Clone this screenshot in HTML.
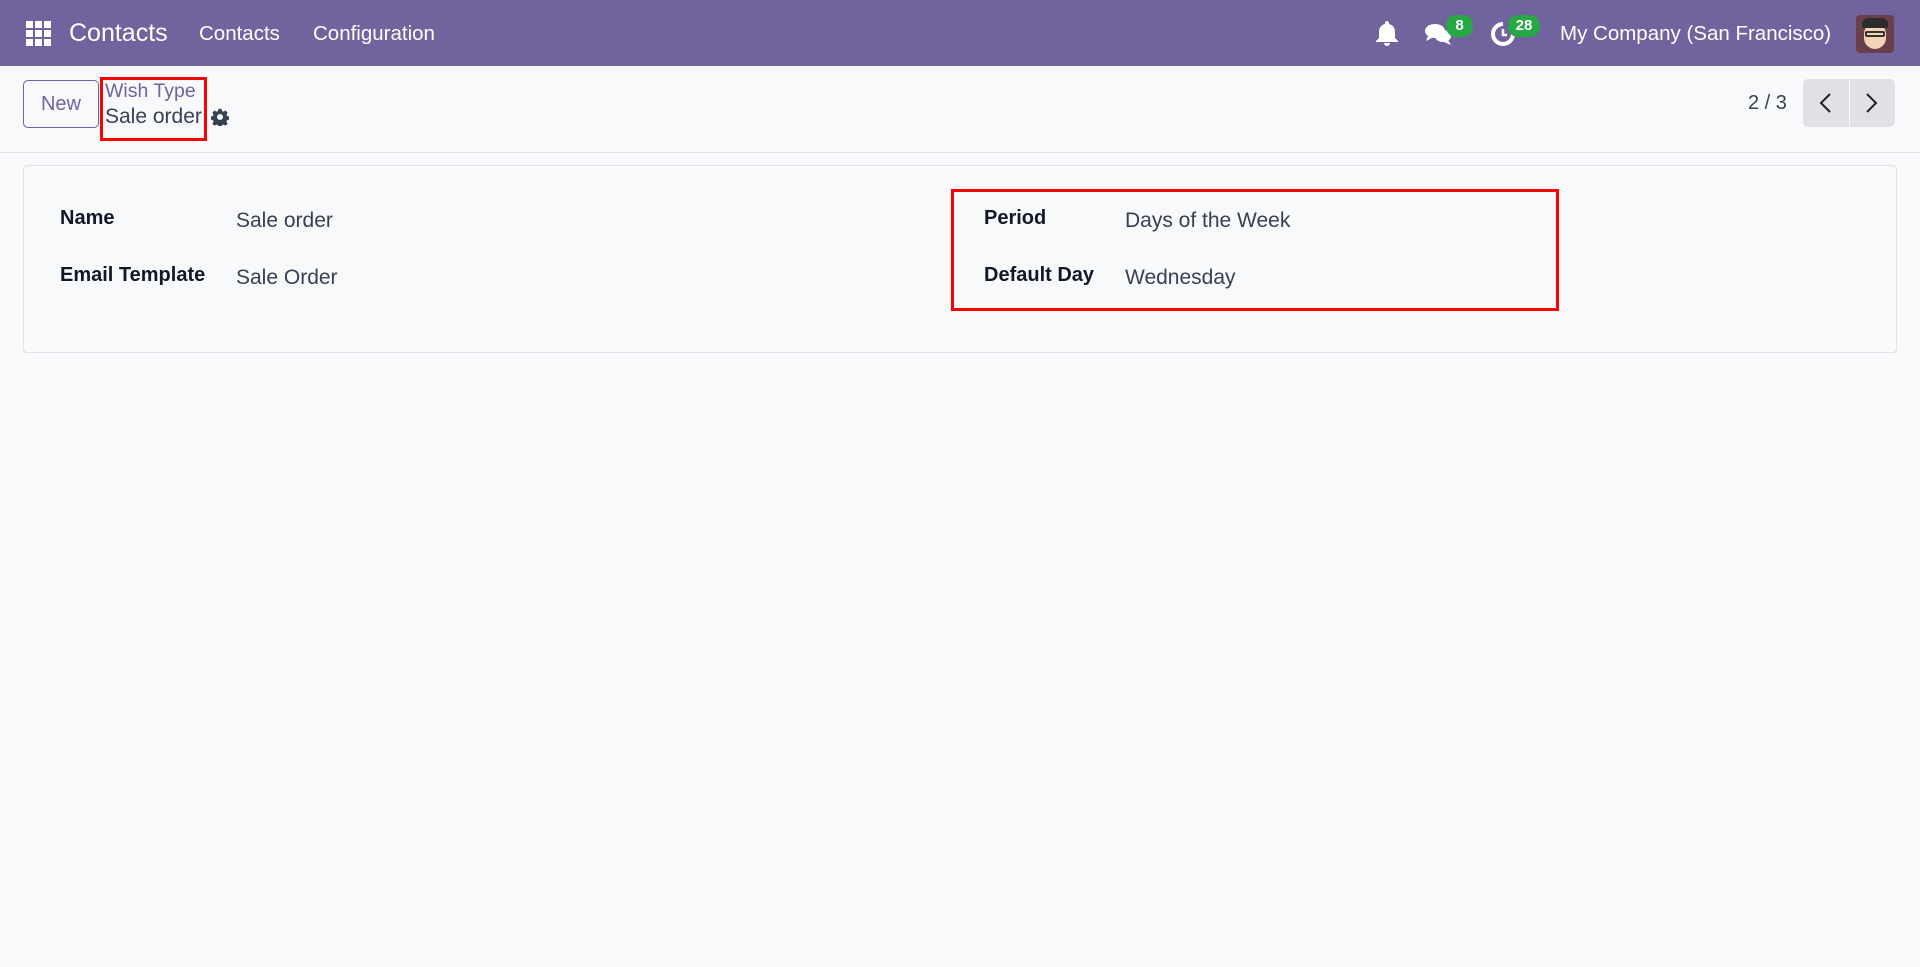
<!DOCTYPE html>
<html><head><meta charset="utf-8"><style>
*{box-sizing:border-box;margin:0;padding:0}
body{width:1920px;height:967px;background:#f8f9fb;font-family:"Liberation Sans",sans-serif;position:relative;overflow:hidden;color:#374151}
.nav{position:absolute;left:0;top:0;width:1920px;height:66px;background:#71639e;color:#fff}
.abs{position:absolute;white-space:nowrap}
.badge{position:absolute;background:#28a745;color:#fff;font-size:15px;font-weight:bold;border-radius:10px;height:22px;line-height:22px;text-align:center}
.lbl{position:absolute;font-weight:bold;font-size:20px;color:#111827;white-space:nowrap}
.val{position:absolute;font-size:21px;color:#374151;white-space:nowrap}
</style></head><body>
<div class="nav">
  <svg class="abs" style="left:26px;top:21px" width="25" height="25" viewBox="0 0 25 25" fill="#fff">
    <rect x="0" y="0" width="7" height="7"/><rect x="9" y="0" width="7" height="7"/><rect x="18" y="0" width="7" height="7"/>
    <rect x="0" y="9" width="7" height="7"/><rect x="9" y="9" width="7" height="7"/><rect x="18" y="9" width="7" height="7"/>
    <rect x="0" y="18" width="7" height="7"/><rect x="9" y="18" width="7" height="7"/><rect x="18" y="18" width="7" height="7"/>
  </svg>
  <div class="abs" style="left:69px;top:19px;font-size:25px">Contacts</div>
  <div class="abs" style="left:199px;top:22px;font-size:20.5px">Contacts</div>
  <div class="abs" style="left:313px;top:22px;font-size:20.5px">Configuration</div>
  <svg class="abs" style="left:1375px;top:20px" width="24" height="27" viewBox="0 0 24 27" fill="#fff"><path d="M12 1c-1 0-2 1-2 2v1C6 5 4 8 4 12v6l-3 3v1h22v-1l-3-3v-6c0-4-2-7-6-8V3c0-1-1-2-2-2zM9 23a3 3 0 0 0 6 0z"/></svg>
  <svg class="abs" style="left:1424px;top:22px" width="30" height="24" viewBox="0 0 30 24" fill="#fff"><ellipse cx="11" cy="9" rx="10" ry="7"/><path d="M4 14l-2 5 6-3z"/><ellipse cx="19" cy="14" rx="8" ry="6"/><path d="M24 18l3 5-7-3z"/></svg>
  <div class="badge" style="left:1446px;top:15px;width:27px">8</div>
  <svg class="abs" style="left:1490px;top:21px" width="26" height="26" viewBox="0 0 26 26" fill="none" stroke="#fff" stroke-width="4"><path d="M13 3a10 10 0 1 0 10 10"/><path d="M13 8v6h4" stroke-width="2.5"/></svg>
  <div class="badge" style="left:1508px;top:15px;width:32px">28</div>
  <div class="abs" style="left:1560px;top:22px;font-size:20.5px">My Company (San Francisco)</div>
  <div class="abs" style="left:1856px;top:15px;width:38px;height:38px;border-radius:4px;background:#6b3e4c;overflow:hidden">
    <div style="position:absolute;left:8px;top:8px;width:22px;height:26px;border-radius:11px;background:#f3d3b5"></div>
    <div style="position:absolute;left:6px;top:3px;width:26px;height:10px;border-radius:6px 6px 2px 2px;background:#2d2d2d"></div>
    <div style="position:absolute;left:9px;top:16px;width:20px;height:6px;border:2px solid #333;border-radius:2px"></div>
  </div>
</div>
<div class="abs" style="left:23px;top:80px;width:76px;height:48px;border:1px solid #71639e;border-radius:5px;color:#71639e;font-size:20px;text-align:center;line-height:46px">New</div>
<div class="abs" style="left:105px;top:80px;font-size:19.5px;color:#71639e">Wish Type</div>
<div class="abs" style="left:105px;top:105px;font-size:21px;color:#374151">Sale order</div>
<div class="abs" style="left:100px;top:77px;width:107px;height:64px;border:3px solid #ff0000"></div>
<svg class="abs" style="left:211px;top:108px" width="18" height="18" viewBox="0 0 24 24" fill="#374151"><path d="M10 1h4l.6 3 2.2 1 2.6-1.7 2.8 2.8L20.5 8.7l1 2.2 3 .6v4l-3 .6-1 2.2 1.7 2.6-2.8 2.8-2.6-1.7-2.2 1-.6 3h-4l-.6-3-2.2-1-2.6 1.7-2.8-2.8 1.7-2.6-1-2.2-3-.6v-4l3-.6 1-2.2L1.8 6.1l2.8-2.8L7.2 5l2.2-1z M12 8a4 4 0 1 0 0 8 4 4 0 0 0 0-8z" fill-rule="evenodd"/></svg>
<div class="abs" style="left:1748px;top:92px;font-size:20px;color:#374151">2 / 3</div>
<div class="abs" style="left:1803px;top:79px;width:46px;height:48px;background:#dfe1e5;border-radius:5px 0 0 5px"></div>
<div class="abs" style="left:1850px;top:79px;width:45px;height:48px;background:#dfe1e5;border-radius:0 5px 5px 0"></div>
<svg class="abs" style="left:1818px;top:92px" width="16" height="22" viewBox="0 0 16 22" fill="none" stroke="#222" stroke-width="2"><path d="M12 2L3 11l9 9"/></svg>
<svg class="abs" style="left:1863px;top:92px" width="16" height="22" viewBox="0 0 16 22" fill="none" stroke="#222" stroke-width="2"><path d="M4 2l9 9-9 9"/></svg>
<div class="abs" style="left:0;top:152px;width:1920px;height:1px;background:#dee2e6"></div>
<div class="abs" style="left:23px;top:165px;width:1874px;height:188px;border:1px solid #dee2e6;border-radius:4px;background:#f8f9fb"></div>
<div class="lbl" style="left:60px;top:207px">Name</div>
<div class="val" style="left:236px;top:209px">Sale order</div>
<div class="lbl" style="left:60px;top:264px">Email Template</div>
<div class="val" style="left:236px;top:266px">Sale Order</div>
<div class="abs" style="left:951px;top:189px;width:608px;height:122px;border:3px solid #ff0000"></div>
<div class="lbl" style="left:984px;top:207px">Period</div>
<div class="val" style="left:1125px;top:209px">Days of the Week</div>
<div class="lbl" style="left:984px;top:264px">Default Day</div>
<div class="val" style="left:1125px;top:266px">Wednesday</div>
</body></html>
